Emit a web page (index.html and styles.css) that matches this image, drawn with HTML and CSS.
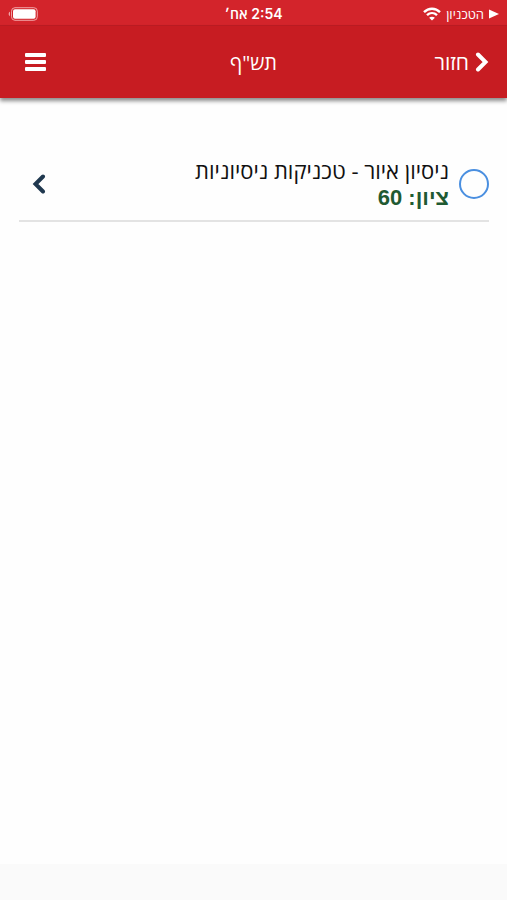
FILE: index.html
```html
<!DOCTYPE html>
<html lang="he" dir="rtl">
  <head>
    <meta charset="UTF-8" />
    <meta name="viewport" content="width=device-width, initial-scale=1.0" />
    <title>תש"ף</title>
    <link rel="stylesheet" href="styles.css">
  </head>
  <body>
    <div class="statusBar">
      <div class="carrier">
        <svg class="play" viewBox="0 0 10 10" aria-hidden="true"><path d="M0 0.5L10 5L0 9.5Z" /></svg>
        <span>הטכניון</span>
        <svg class="wifi" viewBox="0 0 18 14" aria-hidden="true">
          <path d="M1 5.2C5.6 0.6 12.4 0.6 17 5.2" />
          <path d="M4 8.2C6.9 5.4 11.1 5.4 14 8.2" />
          <path class="dot" d="M9 13.6L6.1 10.7C7.7 9.3 10.3 9.3 11.9 10.7Z" />
        </svg>
      </div>
      <div class="time">2:54 אח׳</div>
      <div class="battery">
        <svg viewBox="0 0 30 14" aria-label="סוללה">
          <rect class="shell" x="3.5" y="0.7" width="25.8" height="12.6" rx="3.5" />
          <rect x="5" y="2.3" width="22.6" height="9.4" rx="2" />
          <path class="cap" d="M2 4.8C0.2 5.4 0.2 8.6 2 9.2Z" />
        </svg>
      </div>
    </div>
    <header class="header">
      <a href="#" class="back">
        <svg viewBox="0 0 14 20" aria-hidden="true"><path d="M3 2.5L10.5 10L3 17.5" /></svg>
        <span>חזור</span>
      </a>
      <h1>תש"ף</h1>
      <button class="menuBtn" aria-label="תפריט">
        <svg viewBox="0 0 21 18" aria-hidden="true">
          <rect y="0" width="21" height="4" rx="1" />
          <rect y="7" width="21" height="4" rx="1" />
          <rect y="14" width="21" height="4" rx="1" />
        </svg>
      </button>
    </header>
    <main class="container">
      <div class="course">
        <input type="checkbox" class="check" id="course1" />
        <label for="course1" class="info">
          <span class="name">ניסיון איור - טכניקות ניסיוניות</span>
          <strong class="grade">ציון: 60</strong>
        </label>
        <a href="#" class="open" aria-label="פרטי הקורס">
          <svg viewBox="0 0 14 20" aria-hidden="true"><path d="M11 2.5L3.5 10L11 17.5" /></svg>
        </a>
      </div>
    </main>
    <footer class="footer"></footer>
  </body>
</html>
```

FILE: styles.css
```css
body {
  margin: 0;
  min-height: 100vh;
  display: flex;
  flex-direction: column;
  background: #fefefe;
  color: #111;
  font-family: "Open Sans", "Liberation Sans", sans-serif;
}

.statusBar,
.header {
  display: grid;
  grid-template-columns: 1fr auto 1fr;
  align-items: center;
  color: #fff;
}

.statusBar {
  height: 26px;
  padding: 2px 8px 0;
  box-sizing: border-box;
  background: #d3242b;
  border-bottom: 1px solid #bd1c23;
  font-size: 13px;
}

.carrier {
  display: flex;
  align-items: center;
  gap: 5px;
  font-weight: 500;
}

.statusBar svg {
  display: block;
  fill: #fff;
}

.play {
  width: 10px;
  height: 10px;
}

.wifi {
  width: 18px;
  height: 14px;
}

.statusBar .wifi {
  fill: none;
  stroke: #fff;
  stroke-width: 2.4;
}

.wifi .dot {
  fill: #fff;
  stroke: none;
}

.time {
  font-family: Inter, "Open Sans", sans-serif;
  font-size: 14px;
  font-weight: 600;
}

.battery {
  justify-self: end;
}

.battery svg {
  width: 30px;
  height: 14px;
}

.battery .shell {
  fill: none;
  stroke: #f0a3a6;
}

.battery .cap {
  fill: #f0a3a6;
}

.header {
  height: 72px;
  padding: 0 18px;
  box-sizing: border-box;
  background: #c71c22;
  box-shadow: 0 3px 4px rgba(0, 0, 0, 0.45);
}

.header h1 {
  margin: 0;
  font-size: 20px;
  font-weight: 400;
}

.back {
  display: flex;
  align-items: center;
  justify-self: start;
  gap: 6px;
  color: #fff;
  font-size: 21px;
  text-decoration: none;
}

.back svg,
.open svg {
  display: block;
  width: 14px;
  height: 20px;
  fill: none;
  stroke: #fff;
  stroke-width: 4;
  stroke-linecap: round;
}

.menuBtn {
  justify-self: end;
  margin-left: 7px;
  padding: 0;
  border: none;
  background: none;
  cursor: pointer;
}

.menuBtn svg {
  display: block;
  width: 21px;
  height: 18px;
  fill: #fff;
}

.container {
  flex: 1;
  padding: 58px 18px 0 19px;
}

.course {
  display: flex;
  align-items: center;
  gap: 10px;
  padding-bottom: 8px;
  border-bottom: 2px solid #e3e3e3;
}

.check {
  appearance: none;
  flex: none;
  width: 30px;
  height: 30px;
  margin: 0;
  border: 2px solid #4a8fe0;
  border-radius: 50%;
}

.check:checked {
  background: #4a8fe0;
}

.info {
  flex: 1;
  font-size: 22px;
  font-weight: 500;
  line-height: 28px;
}

.name,
.grade {
  display: block;
}

.grade {
  color: #1f5a32;
  font-family: "Liberation Sans", Arial, sans-serif;
}

.open {
  margin-left: 13px;
}

.open svg {
  stroke: #20384f;
}

.footer {
  height: 36px;
  background: #fafafa;
}
```
